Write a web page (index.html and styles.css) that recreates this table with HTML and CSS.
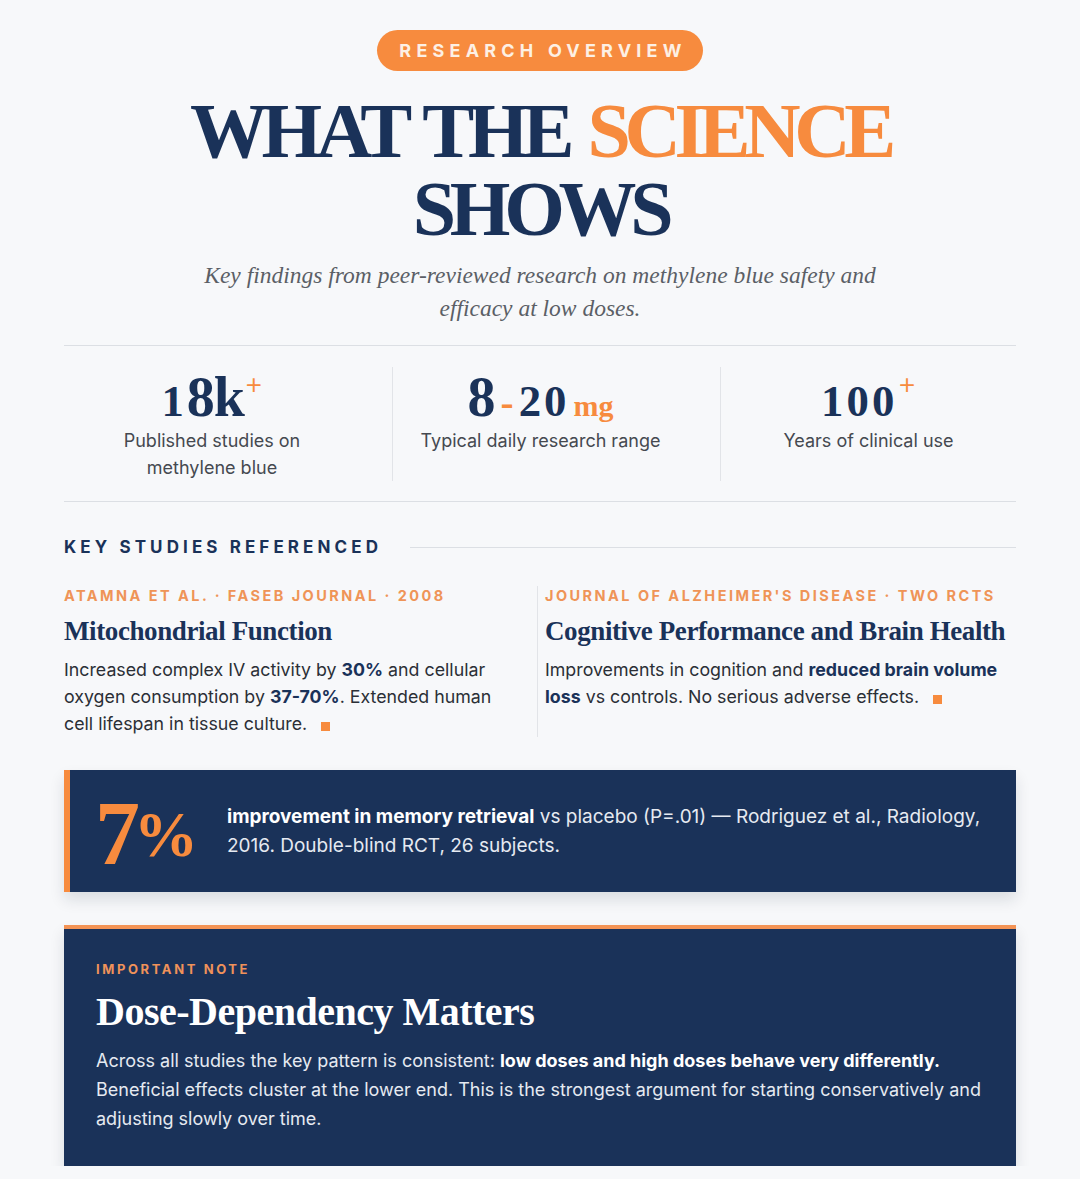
FILE: index.html
```html
<!DOCTYPE html>
<html lang="en">
<head>
<meta charset="utf-8">
<title>What the Science Shows</title>
<link rel="stylesheet" href="styles.css">
</head>
<body>
<main class="page">
  <header class="hero">
    <span class="badge">RESEARCH OVERVIEW</span>
    <h1 class="title">WHAT THE <span class="accent">SCIENCE</span><br>SHOWS</h1>
    <p class="subtitle">Key findings from peer-reviewed research on methylene blue safety and efficacy at low doses.</p>
  </header>

  <section class="stats">
    <div class="stat">
      <div class="stat-num"><span class="os">1</span>8k<sup class="plus">+</sup></div>
      <div class="stat-label">Published studies on<br>methylene blue</div>
    </div>
    <div class="stat">
      <div class="stat-num">8<span class="dash">-</span><span class="os">20</span><span class="unit">mg</span></div>
      <div class="stat-label">Typical daily research range</div>
    </div>
    <div class="stat">
      <div class="stat-num"><span class="os">100</span><sup class="plus">+</sup></div>
      <div class="stat-label">Years of clinical use</div>
    </div>
  </section>

  <section class="studies">
    <div class="section-head">
      <h2 class="section-title">KEY STUDIES REFERENCED</h2>
      <span class="section-rule"></span>
    </div>
    <div class="study-grid">
      <article class="study">
        <div class="study-meta">ATAMNA ET AL. · FASEB JOURNAL · 2008</div>
        <h3 class="study-title">Mitochondrial Function</h3>
        <p class="study-body">Increased complex IV activity by <strong>30%</strong> and cellular oxygen consumption by <strong>37-70%</strong>. Extended human cell lifespan in tissue culture. <span class="sq"></span></p>
      </article>
      <article class="study study-right">
        <div class="study-meta">JOURNAL OF ALZHEIMER'S DISEASE · TWO RCTS</div>
        <h3 class="study-title">Cognitive Performance and Brain Health</h3>
        <p class="study-body">Improvements in cognition and <strong>reduced brain volume loss</strong> vs controls. No serious adverse effects. <span class="sq"></span></p>
      </article>
    </div>
  </section>

  <section class="highlight">
    <div class="big-pct">7<span class="pct">%</span></div>
    <p class="highlight-text"><strong>improvement in memory retrieval</strong> vs placebo (P=.01) — Rodriguez et al., Radiology, 2016. Double-blind RCT, 26 subjects.</p>
  </section>

  <section class="note">
    <div class="note-label">IMPORTANT NOTE</div>
    <h2 class="note-title">Dose-Dependency Matters</h2>
    <p class="note-body">Across all studies the key pattern is consistent: <strong>low doses and high doses behave very differently.</strong> Beneficial effects cluster at the lower end. This is the strongest argument for starting conservatively and adjusting slowly over time.</p>
  </section>
</main>
</body>
</html>
```

FILE: styles.css
```css
* { box-sizing: border-box; }

html, body {
  margin: 0;
  padding: 0;
  background: #f7f8fa;
}

body {
  font-family: Inter, "Liberation Sans", sans-serif;
  color: #2b2f36;
}

.page {
  width: 952px;
  margin: 0 auto;
  padding-top: 30px;
}

/* Hero */
.hero {
  display: flex;
  flex-direction: column;
  align-items: center;
  text-align: center;
}

.badge {
  display: inline-block;
  background: #f78b3e;
  color: #fdf0e4;
  font-weight: 700;
  font-size: 18px;
  letter-spacing: 5.2px;
  line-height: 41px;
  height: 41px;
  padding: 0 16px 0 22px;
  border-radius: 21px;
}

.title {
  margin: 21px 0 0;
  font-family: "Liberation Serif", "DejaVu Serif", serif;
  font-weight: 700;
  font-size: 78px;
  line-height: 78px;
  letter-spacing: -6.3px;
  word-spacing: 6px;
  color: #1a3259;
}

.accent { color: #f78b3e; }

.subtitle {
  margin: 11px 0 0;
  width: 700px;
  font-family: "Liberation Serif", "DejaVu Serif", serif;
  font-style: italic;
  font-size: 23.5px;
  line-height: 33px;
  color: #5b5f66;
}

/* Stats */
.stats {
  margin-top: 20px;
  border-top: 1px solid #dcdfe4;
  border-bottom: 1px solid #dcdfe4;
  display: grid;
  grid-template-columns: repeat(3, 1fr);
  column-gap: 32px;
  padding: 21px 0 20px;
}

.stat {
  text-align: center;
  min-height: 113px;
}

.stat + .stat {
  border-left: 1px solid #e2e4e8;
}

.stat-num {
  font-family: "Liberation Serif", "DejaVu Serif", serif;
  font-weight: 700;
  font-size: 56px;
  line-height: 60px;
  height: 60px;
  color: #1a3259;
  letter-spacing: -1px;
}

.os, .dash, .unit { line-height: 1; }

.os { font-size: 0.8em; letter-spacing: 3px; }

.plus {
  font-family: Inter, "Liberation Sans", sans-serif;
  font-weight: 300;
  font-size: 30px;
  color: #f78b3e;
  vertical-align: 22px;
  line-height: 0;
  margin-left: 0;
}

.dash {
  color: #f78b3e;
  font-size: 0.7em;
  margin: 0 6px;
}

.unit {
  color: #f78b3e;
  font-size: 30px;
  margin-left: 4px;
  letter-spacing: 0;
}

.stat-label {
  margin-top: 0;
  font-size: 18px;
  line-height: 27px;
  color: #454950;
}

/* Studies */
.studies { margin-top: 33px; }

.section-head {
  display: flex;
  align-items: center;
  gap: 28px;
}

.section-title {
  margin: 0;
  font-size: 17px;
  font-weight: 700;
  letter-spacing: 4.1px;
  color: #1a3259;
  white-space: nowrap;
  line-height: 24px;
}

.section-rule {
  flex: 1;
  height: 1px;
  background: #dcdfe4;
}

.study-grid {
  margin-top: 27px;
  display: grid;
  grid-template-columns: 473px 1fr;
}

.study {
  padding: 0 30px 0 0;
}

.study-right {
  border-left: 1px solid #e2e4e8;
  padding-left: 7px;
  padding-right: 0;
}

.study-meta {
  font-size: 14.5px;
  font-weight: 700;
  letter-spacing: 2.45px;
  color: #ef9457;
  line-height: 20px;
}

.study-title {
  margin: 9px 0 0;
  font-family: "Liberation Serif", "DejaVu Serif", serif;
  font-weight: 700;
  font-size: 27px;
  line-height: 32px;
  color: #1a3259;
  letter-spacing: -0.4px;
}

.study-body {
  margin: 9px 0 0;
  font-size: 17.8px;
  line-height: 27px;
  color: #2b2f36;
}

.study-body strong { color: #1a3259; font-weight: 700; }

.sq {
  display: inline-block;
  width: 9px;
  height: 9px;
  background: #f78b3e;
  margin-left: 9px;
  vertical-align: -1px;
}

/* Highlight banner */
.highlight {
  margin-top: 33px;
  background: #1a3259;
  border-left: 6px solid #f78b3e;
  display: flex;
  align-items: center;
  gap: 35px;
  padding: 0 20px 0 25px;
  height: 122px;
  box-shadow: 0 8px 14px rgba(20, 30, 50, 0.12);
}

.big-pct {
  flex: none;
  width: 97px;
  min-width: 0;
  font-family: "Liberation Serif", "DejaVu Serif", serif;
  font-weight: 700;
  font-size: 90px;
  line-height: 1;
  color: #f78b3e;
  letter-spacing: -6px;
  white-space: nowrap;
  margin-top: 6px;
}

.pct {
  font-size: 64px;
  letter-spacing: 0;
  vertical-align: 8px;
}

.highlight-text {
  flex: 1;
  margin: 0;
  font-size: 19px;
  line-height: 29px;
  color: #e6eaf1;
}

.highlight-text strong { color: #ffffff; }

/* Note */
.note {
  margin-top: 33px;
  background: #1a3259;
  border-top: 4px solid #f39355;
  padding: 31px 32px 33px;
  box-shadow: 0 8px 14px rgba(20, 30, 50, 0.12);
}

.note-label {
  font-size: 13px;
  font-weight: 700;
  letter-spacing: 2.6px;
  color: #f0925a;
  line-height: 18px;
}

.note-title {
  margin: 8px 0 0;
  font-family: "Liberation Serif", "DejaVu Serif", serif;
  font-weight: 700;
  font-size: 40px;
  line-height: 52px;
  color: #ffffff;
  letter-spacing: -0.5px;
}

.note-body {
  margin: 8px 0 0;
  font-size: 18px;
  line-height: 29px;
  color: #e6eaf1;
}

.note-body strong { color: #ffffff; }
```
